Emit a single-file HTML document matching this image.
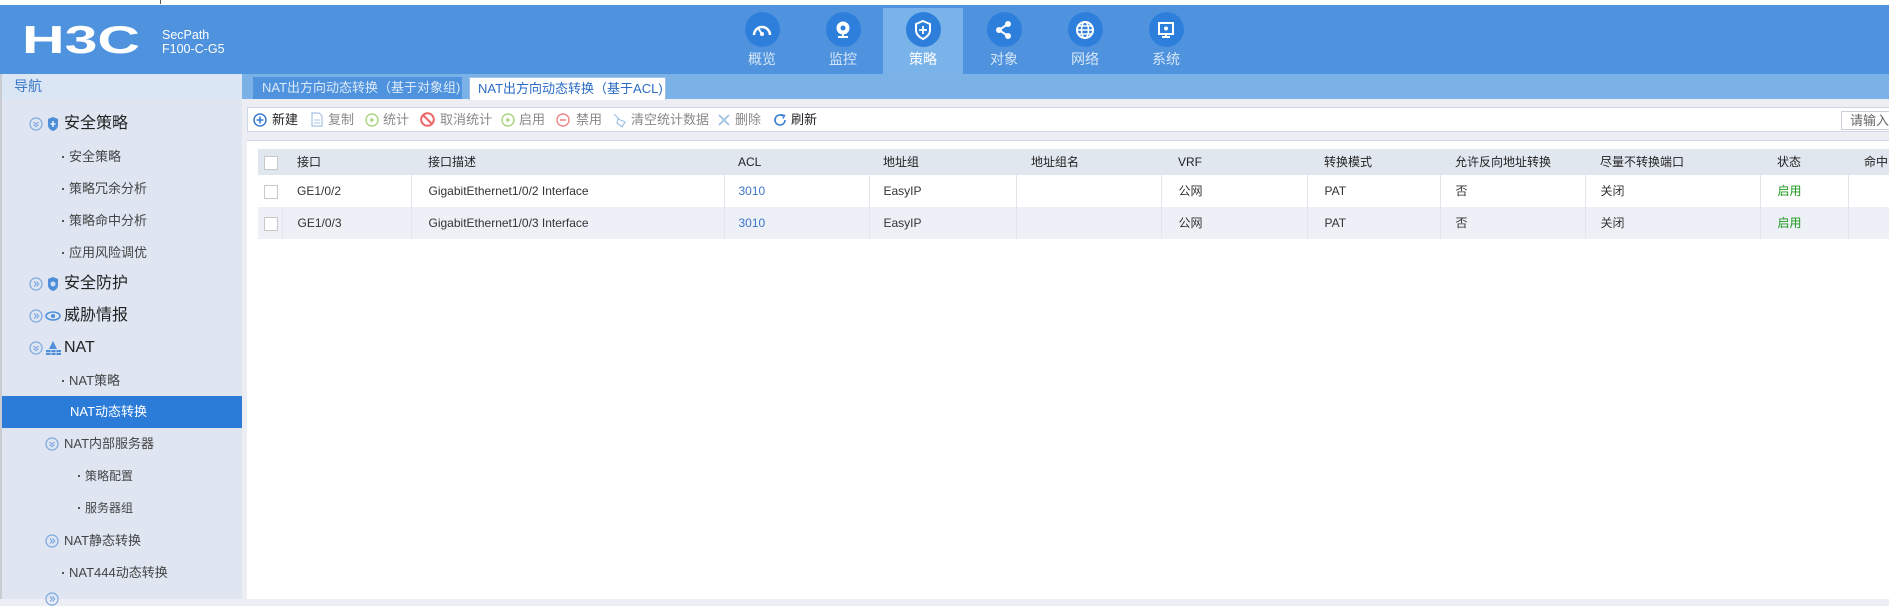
<!DOCTYPE html>
<html><head><meta charset="utf-8">
<style>
*{margin:0;padding:0;box-sizing:border-box}
body{width:1889px;height:599px;overflow:hidden;background:#eceef3;font-family:"Liberation Sans","Noto Sans CJK SC",sans-serif;position:relative;font-size:13px;color:#333}
.abs{position:absolute}
#top{left:0;top:0;width:1889px;height:5px;background:#fff}
#hdr{left:0;top:5px;width:1889px;height:69px;background:#4f93de}
.nav{position:absolute;top:3px;width:80px;height:66px;text-align:center;color:#d6e6f8;font-size:14px}
.nav.act{background:#7ab3ea;color:#fff}
.nav .c{width:35px;height:35px;border-radius:50%;background:#2d7fdb;margin:4px auto 0;display:flex;align-items:center;justify-content:center}
.nav span{display:block;margin-top:3px;line-height:18px}
#tabbar{left:242px;top:74px;width:1647px;height:25px;background:#7ab2e8}
#side{left:0;top:74px;width:242px;height:525px;background:#dfe6f2;border-left:2px solid #c9ccd2}
#navh{left:2px;top:74px;width:240px;height:25px;background:#dbe6f5;color:#3a78c8;font-size:14px;padding-left:12px;line-height:25px}
.si{position:absolute;left:0;width:240px;height:32px;line-height:32px;color:#333;white-space:nowrap}
.big{font-size:16px;color:#222}
.sub{font-size:13px;color:#444}
.dot{position:absolute;width:2px;height:2px;background:#555;top:15px}
.chev{position:absolute;top:9px}
#tb{left:247px;top:107px;width:1642px;height:25px;background:#fff;border:1px solid #cdd5e6;border-right:none}
.t{position:absolute;top:0;line-height:23px;font-size:13px;color:#888;white-space:nowrap}
.t.k{color:#222}
#cnt{left:247px;top:140px;width:1642px;height:459px;background:#fff;border-top:1px solid #cdd5e6}
table{position:absolute;left:258px;top:149px;border-collapse:collapse;font-size:12px;color:#333}
td{height:32px;line-height:16px;padding:0;white-space:nowrap;border-left:1px solid #e3e5ea;vertical-align:middle}
tr.h td{height:26px;background:#e1e7ef;border-left:none;color:#222}
tr.r2 td{background:#edf0f7}
.cb{display:inline-block;width:14px;height:14px;border:1px solid #c8c8c8;background:#fff;vertical-align:middle;margin-left:6px}
.blue{color:#3a76c9}.green{color:#1e9a1e}
</style></head><body>
<svg width="0" height="0" style="position:absolute"><defs>
<g id="cd"><circle cx="7" cy="7" r="6" fill="none" stroke="#7aa7e0" stroke-width="1.2"/><path d="M4.5 5L7 7.2L9.5 5M4.5 7.5L7 9.7L9.5 7.5" fill="none" stroke="#7aa7e0" stroke-width="1.1"/></g>
<g id="cr"><circle cx="7" cy="7" r="6" fill="none" stroke="#7aa7e0" stroke-width="1.2"/><path d="M5 4.5L7.2 7L5 9.5M7.5 4.5L9.7 7L7.5 9.5" fill="none" stroke="#7aa7e0" stroke-width="1.1"/></g>
</defs></svg>
<div id="top" class="abs"><div class="abs" style="left:160px;top:0;width:1px;height:4px;background:#555"></div></div>
<div id="hdr" class="abs">
<svg class="abs" style="left:20px;top:18px" width="125" height="34"><text x="2" y="30" font-family="Liberation Sans" font-weight="bold" font-size="39" fill="#fff" textLength="118" lengthAdjust="spacingAndGlyphs">H3C</text></svg>
<div class="abs" style="left:162px;top:23px;color:#fff;font-size:12.5px;line-height:14px">SecPath<br>F100-C-G5</div>
<div class="nav" style="left:722px"><div class="c"><svg width="22" height="22" viewBox="0 0 22 22"><path d="M3 16A8 8 0 1 1 19 16" fill="none" stroke="#fff" stroke-width="2.5"/><path d="M11 15L7 9" stroke="#fff" stroke-width="2"/><circle cx="11" cy="15" r="2" fill="#fff"/></svg></div><span>概览</span></div>
<div class="nav" style="left:803px"><div class="c"><svg width="22" height="22" viewBox="0 0 22 22"><circle cx="11" cy="9" r="6.5" fill="#fff"/><circle cx="11" cy="9" r="2.5" fill="#2d7fdb"/><rect x="6" y="17" width="10" height="2" fill="#fff"/><rect x="10" y="14" width="2" height="4" fill="#fff"/></svg></div><span>监控</span></div>
<div class="nav act" style="left:883px"><div class="c"><svg width="22" height="22" viewBox="0 0 22 22"><path d="M11 2L18 5V11C18 15 15 18 11 20C7 18 4 15 4 11V5Z" fill="none" stroke="#fff" stroke-width="2"/><path d="M11 7V15M7 11H15" stroke="#fff" stroke-width="1.8"/></svg></div><span>策略</span></div>
<div class="nav" style="left:964px"><div class="c"><svg width="22" height="22" viewBox="0 0 22 22"><circle cx="6" cy="11" r="3" fill="#fff"/><circle cx="15" cy="5" r="3" fill="#fff"/><circle cx="15" cy="17" r="3" fill="#fff"/><path d="M6 11L15 5M6 11L15 17" stroke="#fff" stroke-width="2"/></svg></div><span>对象</span></div>
<div class="nav" style="left:1045px"><div class="c"><svg width="22" height="22" viewBox="0 0 22 22"><circle cx="11" cy="11" r="8" fill="none" stroke="#fff" stroke-width="2"/><ellipse cx="11" cy="11" rx="3.5" ry="8" fill="none" stroke="#fff" stroke-width="1.6"/><path d="M3 11H19M4.5 7H17.5M4.5 15H17.5" stroke="#fff" stroke-width="1.4"/></svg></div><span>网络</span></div>
<div class="nav" style="left:1126px"><div class="c"><svg width="22" height="22" viewBox="0 0 22 22"><rect x="4" y="4" width="14" height="11" fill="none" stroke="#fff" stroke-width="2"/><circle cx="11" cy="9.5" r="2" fill="#fff"/><path d="M11 15V18M7 18H15" stroke="#fff" stroke-width="2"/></svg></div><span>系统</span></div>
</div>
<div id="tabbar" class="abs"></div>
<div class="abs" style="left:232px;top:74px;width:10px;height:25px;background:#9cc6f0"><div style="position:absolute;left:2px;top:8px;border-right:5px solid #2d6fc2;border-top:4.5px solid transparent;border-bottom:4.5px solid transparent"></div></div>
<div class="abs" style="left:253px;top:77px;width:209px;height:22px;background:#4f93de;color:#dce9f8;font-size:13px;line-height:22px;padding-left:9px">NAT出方向动态转换（基于对象组)</div>
<div class="abs" style="left:469px;top:77px;width:197px;height:23px;background:#fff;border:1px solid #9fc0e8;border-bottom:none;color:#2a6cc6;font-size:13px;line-height:22px;padding-left:8px">NAT出方向动态转换（基于ACL)</div>

<div id="side" class="abs"></div>
<div id="navh" class="abs">导航</div>
<div class="abs" style="left:2px;top:99px;width:240px;height:500px">
<div class="si big" style="top:9px"><svg class="chev" style="left:27px" width="14" height="14"><use href="#cd"/></svg><svg class="abs" style="left:45px;top:8px" width="12" height="16"><path d="M6 1L11 3V9C11 12 9 14 6 15C3 14 1 12 1 9V3Z" fill="#4f8fd9"/><path d="M6 5V11M3.5 8H8.5" stroke="#fff" stroke-width="1.3"/></svg><span style="position:absolute;left:62px">安全策略</span></div>
<div class="si sub" style="top:42px"><div class="dot" style="left:60px"></div><span style="position:absolute;left:67px">安全策略</span></div>
<div class="si sub" style="top:74px"><div class="dot" style="left:60px"></div><span style="position:absolute;left:67px">策略冗余分析</span></div>
<div class="si sub" style="top:106px"><div class="dot" style="left:60px"></div><span style="position:absolute;left:67px">策略命中分析</span></div>
<div class="si sub" style="top:138px"><div class="dot" style="left:60px"></div><span style="position:absolute;left:67px">应用风险调优</span></div>
<div class="si big" style="top:169px"><svg class="chev" style="left:27px" width="14" height="14"><use href="#cr"/></svg><svg class="abs" style="left:45px;top:8px" width="12" height="16"><path d="M6 1L11 3V9C11 12 9 14 6 15C3 14 1 12 1 9V3Z" fill="#4f8fd9"/><circle cx="6" cy="8" r="2.5" fill="#cfe0f5"/></svg><span style="position:absolute;left:62px">安全防护</span></div>
<div class="si big" style="top:201px"><svg class="chev" style="left:27px" width="14" height="14"><use href="#cr"/></svg><svg class="abs" style="left:43px;top:10px" width="17" height="12"><ellipse cx="8" cy="6" rx="7" ry="4" fill="none" stroke="#4f8fd9" stroke-width="1.5"/><circle cx="8" cy="6" r="2" fill="#4f8fd9"/></svg><span style="position:absolute;left:62px">威胁情报</span></div>
<div class="si big" style="top:233px"><svg class="chev" style="left:27px" width="14" height="14"><use href="#cd"/></svg><svg class="abs" style="left:43px;top:8px" width="17" height="16"><path d="M8 1L12 9H4Z" fill="#4f8fd9"/><rect x="1" y="10" width="15" height="5" fill="#4f8fd9"/><path d="M1 12.5H16M6 10V15M11 10V15" stroke="#dfe6f2" stroke-width="0.8"/></svg><span style="position:absolute;left:62px">NAT</span></div>
<div class="si sub" style="top:266px"><div class="dot" style="left:60px"></div><span style="position:absolute;left:67px">NAT策略</span></div>
<div class="si sub" style="top:297px;background:#2b7cd9;color:#fff"><span style="position:absolute;left:68px">NAT动态转换</span></div>
<div class="si sub" style="top:329px"><svg class="chev" style="left:43px" width="14" height="14"><use href="#cd"/></svg><span style="position:absolute;left:62px">NAT内部服务器</span></div>
<div class="si sub" style="top:361px;font-size:12px"><div class="dot" style="left:76px"></div><span style="position:absolute;left:83px">策略配置</span></div>
<div class="si sub" style="top:393px;font-size:12px"><div class="dot" style="left:76px"></div><span style="position:absolute;left:83px">服务器组</span></div>
<div class="si sub" style="top:426px"><svg class="chev" style="left:43px" width="14" height="14"><use href="#cr"/></svg><span style="position:absolute;left:62px">NAT静态转换</span></div>
<div class="si sub" style="top:458px"><div class="dot" style="left:60px"></div><span style="position:absolute;left:67px">NAT444动态转换</span></div>
<svg class="chev" style="left:43px;top:493px" width="14" height="14"><use href="#cr"/></svg>
</div>

<div id="tb" class="abs">
<svg class="abs" style="left:5px;top:5px" width="14" height="14"><circle cx="7" cy="7" r="6" fill="none" stroke="#3a7ed1" stroke-width="1.5"/><path d="M7 3.5V10.5M3.5 7H10.5" stroke="#3a7ed1" stroke-width="1.6"/></svg><span class="t k" style="left:24px">新建</span>
<svg class="abs" style="left:63px;top:4px" width="12" height="15"><path d="M1 1H8L11 4V14H1Z" fill="none" stroke="#a8c3e4" stroke-width="1.2"/><path d="M3 8H9M3 11H9" stroke="#a8c3e4"/></svg><span class="t" style="left:80px">复制</span>
<svg class="abs" style="left:117px;top:5px" width="14" height="14"><circle cx="7" cy="7" r="6" fill="none" stroke="#a9d57d" stroke-width="1.4"/><path d="M5.5 4.5L9.5 7L5.5 9.5Z" fill="#a9d57d"/></svg><span class="t" style="left:135px">统计</span>
<svg class="abs" style="left:172px;top:4px" width="15" height="15"><circle cx="7.5" cy="7.5" r="6.3" fill="none" stroke="#e66" stroke-width="2"/><path d="M3 3L12 12" stroke="#e66" stroke-width="2"/></svg><span class="t" style="left:192px">取消统计</span>
<svg class="abs" style="left:253px;top:5px" width="14" height="14"><circle cx="7" cy="7" r="6" fill="none" stroke="#a9d57d" stroke-width="1.4"/><path d="M5.5 4.5L9.5 7L5.5 9.5Z" fill="#a9d57d"/></svg><span class="t" style="left:271px">启用</span>
<svg class="abs" style="left:308px;top:5px" width="14" height="14"><circle cx="7" cy="7" r="6" fill="none" stroke="#ee8888" stroke-width="1.4"/><path d="M4 7H10" stroke="#ee8888" stroke-width="1.6"/></svg><span class="t" style="left:328px">禁用</span>
<svg class="abs" style="left:364px;top:4px" width="15" height="16"><path d="M2 2L8 8M6 7L13 10L10 15L5 11Z" fill="none" stroke="#9fc0e4" stroke-width="1.2"/></svg><span class="t" style="left:383px">清空统计数据</span>
<svg class="abs" style="left:470px;top:6px" width="12" height="12"><path d="M1 1L11 11M11 1L1 11" stroke="#9fc0e4" stroke-width="1.6"/></svg><span class="t" style="left:487px">删除</span>
<svg class="abs" style="left:525px;top:5px" width="14" height="14"><path d="M12 7A5 5 0 1 1 10 3" fill="none" stroke="#3a7ed1" stroke-width="1.6"/><path d="M8 1.5L11.5 2.5L10 5.5" fill="none" stroke="#3a7ed1" stroke-width="1.4"/></svg><span class="t k" style="left:543px">刷新</span>
<div class="abs" style="left:1593px;top:3px;width:52px;height:19px;border:1px solid #c8cdd8;border-right:none;color:#666;font-size:13px;line-height:17px;padding-left:8px;white-space:nowrap;overflow:hidden">请输入</div>
</div>
<div id="cnt" class="abs"></div>

<table>
<colgroup><col style="width:24px"><col style="width:129px"><col style="width:313px"><col style="width:145px"><col style="width:147px"><col style="width:145px"><col style="width:146px"><col style="width:133px"><col style="width:145px"><col style="width:175px"><col style="width:88px"><col style="width:41px"></colgroup>
<tr class="h"><td><span class="cb"></span></td><td style="padding-left:15px">接口</td><td style="padding-left:17px">接口描述</td><td style="padding-left:14px">ACL</td><td style="padding-left:14px">地址组</td><td style="padding-left:15px">地址组名</td><td style="padding-left:17px">VRF</td><td style="padding-left:17px">转换模式</td><td style="padding-left:15px">允许反向地址转换</td><td style="padding-left:15px">尽量不转换端口</td><td style="padding-left:17px">状态</td><td style="padding-left:16px;overflow:hidden">命中</td></tr>
<tr><td style="border-left:none"><span class="cb"></span></td><td style="padding-left:15px;border-left:none">GE1/0/2</td><td style="padding-left:17px">GigabitEthernet1/0/2 Interface</td><td style="padding-left:14px" class="blue">3010</td><td style="padding-left:14px">EasyIP</td><td></td><td style="padding-left:17px">公网</td><td style="padding-left:17px">PAT</td><td style="padding-left:15px">否</td><td style="padding-left:15px">关闭</td><td style="padding-left:17px" class="green">启用</td><td></td></tr>
<tr class="r2"><td style="border-left:none"><span class="cb"></span></td><td style="padding-left:15px">GE1/0/3</td><td style="padding-left:17px">GigabitEthernet1/0/3 Interface</td><td style="padding-left:14px" class="blue">3010</td><td style="padding-left:14px">EasyIP</td><td></td><td style="padding-left:17px">公网</td><td style="padding-left:17px">PAT</td><td style="padding-left:15px">否</td><td style="padding-left:15px">关闭</td><td style="padding-left:17px" class="green">启用</td><td></td></tr>
</table>
</body></html>
